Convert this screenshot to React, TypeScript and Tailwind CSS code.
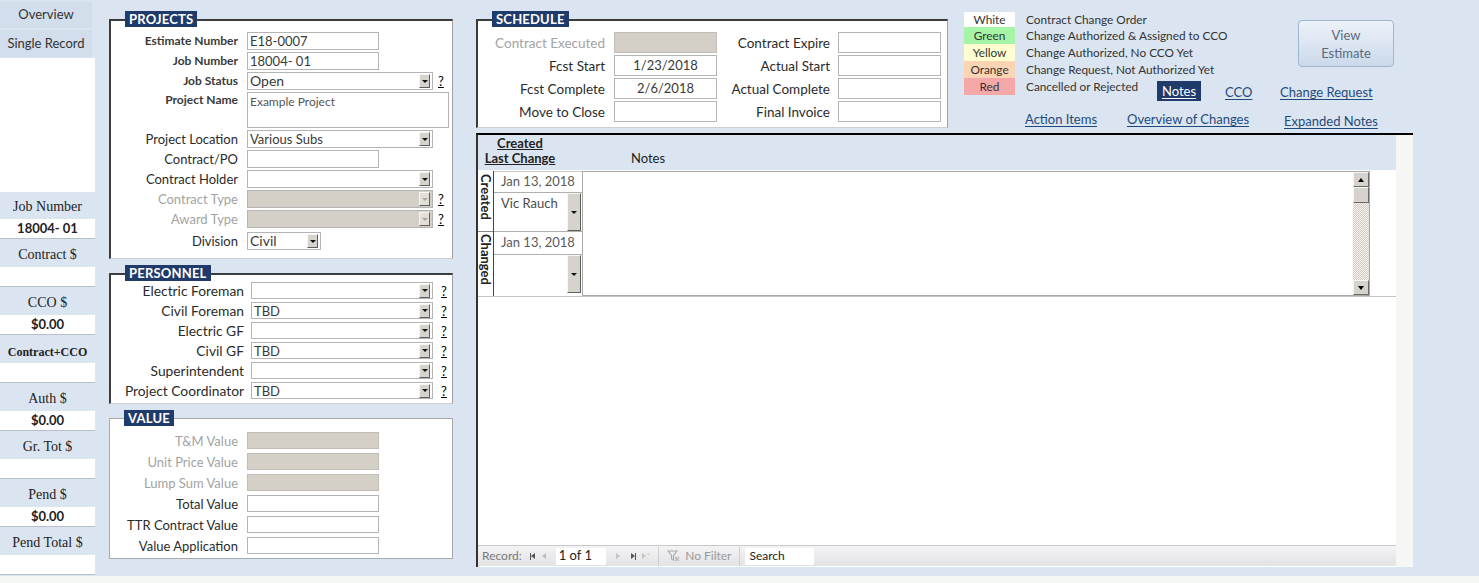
import React from 'react'

function Drop({ className = '', off = false }: { className?: string; off?: boolean }) {
  return (
    <span
      className={`flex shrink-0 items-center justify-center border border-t-[#f6f6f6] border-l-[#f6f6f6] border-r-[#5e5e5e] border-b-[#5e5e5e] ${
        off ? 'bg-[#e2dfd9]' : 'bg-[#d6d3cc]'
      } ${className}`}
    >
      <span
        className={`block h-0 w-0 border-x-[3px] border-t-[3px] border-x-transparent ${
          off ? 'border-t-[#a8a8a8]' : 'border-t-[#111]'
        }`}
      />
    </span>
  )
}

function Combo({
  value = '',
  className = '',
  off = false,
  text = 'text-[13px]',
}: {
  value?: string
  className?: string
  off?: boolean
  text?: string
}) {
  return (
    <div
      className={`flex h-full items-center border border-[#b4b4b4] ${off ? 'bg-[#d4d0c8]' : 'bg-white'} ${className}`}
    >
      <span className={`flex-1 whitespace-nowrap pl-[2px] leading-[16px] text-[#3a3a3a] ${text}`}>{value}</span>
      <Drop off={off} className="mr-[2px] h-[14px] w-[11px]" />
    </div>
  )
}

function Box({
  value = '',
  className = '',
  off = false,
  text = 'text-[13px]',
}: {
  value?: string
  className?: string
  off?: boolean
  text?: string
}) {
  return (
    <div
      className={`flex h-full items-center border ${
        off ? 'border-[#c2beb6] bg-[#d4d0c8]' : 'border-[#b4b4b4] bg-white'
      } ${className}`}
    >
      <span className={`whitespace-nowrap pl-[2px] leading-[16px] text-[#3a3a3a] ${text}`}>{value}</span>
    </div>
  )
}

function Help({ className = 'ml-[5px]' }: { className?: string }) {
  return <span className={`text-[13px] leading-[16px] text-black underline ${className}`}>?</span>
}

function Panel({
  title,
  className = '',
  light = false,
  children,
}: {
  title: string
  className?: string
  light?: boolean
  children?: React.ReactNode
}) {
  return (
    <div
      className={`relative bg-white ${
        light
          ? 'border border-[#a9a9a9]'
          : 'border-t-2 border-l-2 border-r border-b border-t-[#3c3c3c] border-l-[#3c3c3c] border-r-[#a0a0a0] border-b-[#cfcfcf]'
      } ${className}`}
    >
      <span
        className={`absolute left-[14px] bg-[#1f3b6b] px-[4px] text-[13px] font-bold leading-[16px] tracking-[0.2px] text-white ${
          light ? '-top-[9px]' : '-top-[10px]'
        }`}
      >
        {title}
      </span>
      {children}
    </div>
  )
}

function Row({
  label,
  labelClass = '',
  lw,
  gap,
  h,
  top = false,
  children,
}: {
  label: string
  labelClass?: string
  lw: string
  gap: string
  h: string
  top?: boolean
  children?: React.ReactNode
}) {
  return (
    <div className={`flex ${top ? 'items-start' : 'items-center'} ${h}`}>
      <span className={`shrink-0 whitespace-nowrap text-right leading-[16px] ${lw} ${labelClass}`}>{label}</span>
      <div className={`flex h-full items-center ${gap}`}>{children}</div>
    </div>
  )
}

const sideItems: [string, string][] = [
  ['Job Number', '18004- 01'],
  ['Contract $', ''],
  ['CCO $', '$0.00'],
  ['Contract+CCO', ''],
  ['Auth $', '$0.00'],
  ['Gr. Tot $', ''],
  ['Pend $', '$0.00'],
  ['Pend Total $', ''],
]

function Sidebar() {
  return (
    <div className="flex w-[95px] shrink-0 flex-col">
      <div className="mt-[2px] flex h-[26px] w-[92px] items-center justify-center bg-[#d2deeb] text-[13px] text-[#333]">
        Overview
      </div>
      <div className="mt-[2px] flex h-[27px] w-[92px] items-center justify-center bg-[#d2deeb] text-[13px] text-[#333]">
        Single Record
      </div>
      <div className="mt-[1px] h-[134px] bg-white" />
      {sideItems.map(([label, value], i) => (
        <div key={label} className="flex flex-col">
          <div
            className={`flex items-end justify-center pb-[2px] font-['Liberation_Serif',serif] text-[#222] ${
              i === 0 ? 'h-[27px]' : 'h-[28px]'
            } ${label === 'Contract+CCO' ? 'text-[12px] font-bold' : 'text-[14px]'}`}
          >
            {label}
          </div>
          <div className="flex h-[20px] items-center justify-center border-b border-[#b9bfc7] bg-white text-[13px] font-bold text-[#222]">
            {value}
          </div>
        </div>
      ))}
    </div>
  )
}

function Projects() {
  const lw = 'w-[127px]'
  const gap = 'ml-[9px]'
  const dark = 'text-[12px] font-bold text-[#3a3a3a]'
  const reg = 'text-[13px] text-[#2b2b2b]'
  const grey = 'text-[13px] text-[#a3a3a3]'
  return (
    <Panel title="PROJECTS" className="mt-[19px] h-[240px] w-[344px]">
      <div className="flex flex-col gap-[2px] pt-[11px]">
        <Row label="Estimate Number" labelClass={dark} lw={lw} gap={gap} h="h-[18px]">
          <Box value="E18-0007" className="w-[132px]" />
        </Row>
        <Row label="Job Number" labelClass={dark} lw={lw} gap={gap} h="h-[18px]">
          <Box value="18004- 01" className="w-[132px]" />
        </Row>
        <Row label="Job Status" labelClass={dark} lw={lw} gap={gap} h="h-[18px]">
          <Combo value="Open" className="w-[186px]" text="text-[14px]" />
          <Help />
        </Row>
        <Row label="Project Name" labelClass={dark} lw={lw} gap={gap} h="h-[36px]" top>
          <div className="h-full w-[202px] border border-[#b4b4b4] bg-white pl-[2px] pt-[1px] text-[12px] leading-[16px] text-[#555]">
            Example Project
          </div>
        </Row>
        <Row label="Project Location" labelClass={reg} lw={lw} gap={gap} h="h-[18px]">
          <Combo value="Various Subs" className="w-[186px]" />
        </Row>
        <Row label="Contract/PO" labelClass={reg} lw={lw} gap={gap} h="h-[18px]">
          <Box className="w-[132px]" />
        </Row>
        <Row label="Contract Holder" labelClass={reg} lw={lw} gap={gap} h="h-[18px]">
          <Combo className="w-[186px]" />
        </Row>
        <Row label="Contract Type" labelClass={grey} lw={lw} gap={gap} h="h-[18px]">
          <Combo off className="w-[186px]" />
          <Help />
        </Row>
        <Row label="Award Type" labelClass={grey} lw={lw} gap={gap} h="h-[18px]">
          <Combo off className="w-[186px]" />
          <Help />
        </Row>
        <div className="mt-[2px]">
          <Row label="Division" labelClass={reg} lw={lw} gap={gap} h="h-[18px]">
            <Combo value="Civil" className="w-[74px]" text="text-[14px]" />
          </Row>
        </div>
      </div>
    </Panel>
  )
}

const people: [string, string][] = [
  ['Electric Foreman', ''],
  ['Civil Foreman', 'TBD'],
  ['Electric GF', ''],
  ['Civil GF', 'TBD'],
  ['Superintendent', ''],
  ['Project Coordinator', 'TBD'],
]

function Personnel() {
  return (
    <Panel title="PERSONNEL" className="mt-[14px] h-[131px] w-[344px]">
      <div className="flex flex-col gap-[3px] pt-[7px]">
        {people.map(([label, value]) => (
          <Row
            key={label}
            label={label}
            labelClass="text-[13.8px] text-[#2b2b2b]"
            lw="w-[133px]"
            gap="ml-[7px]"
            h="h-[17px]"
          >
            <Combo value={value} className="w-[182px]" />
            <Help className="ml-[8px]" />
          </Row>
        ))}
      </div>
    </Panel>
  )
}

const values: [string, boolean][] = [
  ['T&M Value', true],
  ['Unit Price Value', true],
  ['Lump Sum Value', true],
  ['Total Value', false],
  ['TTR Contract Value', false],
  ['Value Application', false],
]

function Value() {
  return (
    <Panel title="VALUE" light className="mt-[14px] h-[141px] w-[344px]">
      <div className="flex flex-col gap-[4px] pt-[13px]">
        {values.map(([label, off]) => (
          <Row
            key={label}
            label={label}
            labelClass={`text-[13px] ${off ? 'text-[#a3a3a3]' : 'text-[#2b2b2b]'}`}
            lw="w-[128px]"
            gap="ml-[9px]"
            h="h-[17px]"
          >
            <Box off={off} className="w-[132px]" />
          </Row>
        ))}
      </div>
    </Panel>
  )
}

const sched: [string, string, boolean, string][] = [
  ['Contract Executed', '', true, 'Contract Expire'],
  ['Fcst Start', '1/23/2018', false, 'Actual Start'],
  ['Fcst Complete', '2/6/2018', false, 'Actual Complete'],
  ['Move to Close', '', false, 'Final Invoice'],
]

function Schedule() {
  return (
    <Panel title="SCHEDULE" className="mt-[19px] h-[109px] w-[472px] shrink-0">
      <div className="flex flex-col gap-[2px] pt-[11px]">
        {sched.map(([l1, v1, off, l2]) => (
          <div key={l1} className="flex h-[21px] items-center">
            <span
              className={`w-[127px] shrink-0 text-right text-[13.5px] leading-[16px] ${
                off ? 'text-[#a3a3a3]' : 'text-[#2b2b2b]'
              }`}
            >
              {l1}
            </span>
            <div
              className={`ml-[9px] flex h-full w-[103px] items-center justify-center border text-[13px] text-[#3a3a3a] ${
                off ? 'border-[#c2beb6] bg-[#d4d0c8]' : 'border-[#b4b4b4] bg-white'
              }`}
            >
              {v1}
            </div>
            <span className="w-[113px] shrink-0 text-right text-[13.5px] leading-[16px] text-[#2b2b2b]">{l2}</span>
            <div className="ml-[8px] h-full w-[103px] border border-[#b4b4b4] bg-white" />
          </div>
        ))}
      </div>
    </Panel>
  )
}

const legend: [string, string, string][] = [
  ['White', 'bg-white', 'Contract Change Order'],
  ['Green', 'bg-[#a6f4a6]', 'Change Authorized & Assigned to CCO'],
  ['Yellow', 'bg-[#ffffd2]', 'Change Authorized, No CCO Yet'],
  ['Orange', 'bg-[#fbd4b3]', 'Change Request, Not Authorized Yet'],
  ['Red', 'bg-[#f5a8a8]', 'Cancelled or Rejected'],
]

const link = 'text-[13px] leading-[16px] text-[#1f4a7c] underline underline-offset-2'

function TopRight() {
  return (
    <div className="ml-[16px] flex flex-1 flex-col">
      <div className="flex">
        <div className="flex w-[334px] flex-col pt-[12px]">
          {legend.map(([name, bg, desc], i) => (
            <div key={name} className={`flex items-start whitespace-nowrap ${i === 0 ? 'h-[15px]' : 'h-[17px]'}`}>
              <span
                className={`flex h-full w-[51px] shrink-0 items-center justify-center text-[11.8px] leading-[14px] text-[#333] ${bg}`}
              >
                {name}
              </span>
              {i < 4 ? (
                <span className="ml-[11px] flex h-full items-center text-[11.8px] leading-[14px] text-[#333]">{desc}</span>
              ) : (
                <>
                  <span className="ml-[11px] flex h-full w-[131px] shrink-0 items-center text-[11.8px] leading-[14px] text-[#333]">
                    {desc}
                  </span>
                  <span className="mt-[3px] flex h-[20px] w-[44px] shrink-0 items-center justify-center bg-[#1f3b6b] text-[13px] leading-[16px] text-white underline underline-offset-2">
                    Notes
                  </span>
                  <span className={`ml-[24px] mt-[6px] w-[55px] shrink-0 ${link}`}>CCO</span>
                  <span className={`mt-[6px] shrink-0 ${link}`}>Change Request</span>
                </>
              )}
            </div>
          ))}
        </div>
        <div className="mt-[20px] flex h-[47px] w-[96px] shrink-0 flex-col items-center justify-center rounded-[4px] border border-[#9fb6d3] bg-gradient-to-b from-[#edf2f9] to-[#cbd9ea] text-[13px] leading-[18px] text-[#5b6a7e]">
          <span>View</span>
          <span>Estimate</span>
        </div>
      </div>
      <div className="ml-[61px] mt-[16px] flex items-start whitespace-nowrap">
        <span className={`w-[102px] shrink-0 ${link}`}>Action Items</span>
        <span className={`w-[157px] shrink-0 ${link}`}>Overview of Changes</span>
        <span className={`mt-[2px] ${link}`}>Expanded Notes</span>
      </div>
    </div>
  )
}

function Tri({ dir, className = '' }: { dir: 'l' | 'r' | 'u' | 'd'; className?: string }) {
  const cls =
    dir === 'l'
      ? 'border-y-[3.5px] border-r-[4px] border-y-transparent'
      : dir === 'r'
        ? 'border-y-[3.5px] border-l-[4px] border-y-transparent'
        : dir === 'u'
          ? 'border-x-[3.5px] border-b-[4px] border-x-transparent'
          : 'border-x-[3.5px] border-t-[4px] border-x-transparent'
  return <span className={`block h-0 w-0 ${cls} ${className}`} />
}

function ScrollBtn({ up }: { up: boolean }) {
  return (
    <div className="flex h-[15px] items-center justify-center border border-t-[#f6f6f6] border-l-[#f6f6f6] border-r-[#6b6b6b] border-b-[#6b6b6b] bg-[#d6d3cc]">
      <Tri dir={up ? 'u' : 'd'} className={up ? 'border-b-black' : 'border-t-black'} />
    </div>
  )
}

function Subform() {
  return (
    <div className="flex h-[434px] w-[937px] border-t-2 border-l-2 border-t-black border-l-[#333]">
      <div className="flex w-[918px] flex-col">
        <div className="flex h-[35px] shrink-0 items-end bg-[#dbe5f1] pb-[4px]">
          <div className="flex w-[84px] flex-col items-center text-[13px] font-bold leading-[15px] text-[#222]">
            <span className="underline">Created</span>
            <span className="underline">Last Change</span>
          </div>
          <span className="ml-[69px] text-[13px] leading-[15px] text-[#222]">Notes</span>
        </div>
        <div className="flex-1 bg-white pt-[1px]">
          <div className="flex h-[126px] border-b border-[#c4c4c4]">
            <div className="flex w-[16px] shrink-0 flex-col border-r border-[#444]">
              <div className="flex h-[61px] justify-center border-b border-[#888] pt-[3px]">
                <span className="text-[13px] font-bold leading-[14px] text-[#222] [writing-mode:vertical-rl]">Created</span>
              </div>
              <div className="flex flex-1 justify-center pt-[2px]">
                <span className="text-[13px] font-bold leading-[14px] text-[#222] [writing-mode:vertical-rl]">Changed</span>
              </div>
            </div>
            <div className="flex w-[88px] shrink-0 flex-col">
              <div className="flex h-[21px] items-center justify-center border-t border-[#c8c8c8] text-[13px] text-[#5a5a5a]">
                Jan 13, 2018
              </div>
              <div className="flex h-[40px] border-y border-[#b0b0b0]">
                <span className="flex-1 pl-[7px] pt-[2px] text-[13px] leading-[16px] text-[#4a4a4a]">Vic Rauch</span>
                <Drop className="mr-[1px] h-[38px] w-[14px]" />
              </div>
              <div className="flex h-[22px] items-center justify-center text-[13px] text-[#5a5a5a]">Jan 13, 2018</div>
              <div className="flex flex-1 border-t border-[#b0b0b0]">
                <span className="flex-1" />
                <Drop className="mr-[1px] h-[38px] w-[14px]" />
              </div>
            </div>
            <div className="flex w-[788px] shrink-0 justify-end border border-[#a9a9a9]">
              <div className="flex w-[16px] flex-col">
                <ScrollBtn up />
                <div className="h-[16px] border border-t-[#f6f6f6] border-l-[#f6f6f6] border-r-[#6b6b6b] border-b-[#6b6b6b] bg-[#d6d3cc]" />
                <div className="flex-1 bg-[image:repeating-conic-gradient(#cfcbc3_0%_25%,#f5f4f0_0%_50%)] bg-[length:2px_2px]" />
                <ScrollBtn up={false} />
              </div>
            </div>
          </div>
        </div>
        <div className="flex h-[21px] shrink-0 items-center border-t border-[#c9c9c9] bg-gradient-to-b from-[#f3f3f5] to-[#e3e3e5] text-[12px] text-[#7a7a7a]">
          <span className="pl-[4px]">Record:</span>
          <span className="ml-[8px] flex items-center">
            <span className="h-[7px] w-[1px] bg-[#555]" />
            <Tri dir="l" className="border-r-[#555]" />
          </span>
          <Tri dir="l" className="ml-[7px] border-r-[#bdbdbd]" />
          <span className="ml-[10px] flex h-[17px] w-[50px] items-center bg-white pl-[3px] text-[13px] text-[#222]">1 of 1</span>
          <Tri dir="r" className="ml-[10px] border-l-[#c4c4c4]" />
          <span className="ml-[11px] flex items-center">
            <Tri dir="r" className="border-l-[#555]" />
            <span className="h-[7px] w-[1px] bg-[#555]" />
          </span>
          <span className="ml-[6px] flex items-center">
            <Tri dir="r" className="border-l-[#c4c4c4]" />
            <span className="ml-[1px] text-[8px] leading-[8px] text-[#d4d4a0]">*</span>
          </span>
          <span className="ml-[8px] h-[19px] w-[1px] bg-[#cfcfcf]" />
          <svg className="ml-[8px]" width="13" height="12" viewBox="0 0 13 12">
            <path d="M1 1h9L6.5 5.5V10L4.5 9V5.5Z" fill="none" stroke="#a9a9a9" strokeWidth="1.1" />
            <path d="M8 7l4 4M12 7l-4 4" stroke="#b7b7b7" strokeWidth="1.2" />
          </svg>
          <span className="ml-[5px] text-[#9a9a9a]">No Filter</span>
          <span className="ml-[8px] h-[19px] w-[1px] bg-[#cfcfcf]" />
          <span className="ml-[5px] flex h-[17px] w-[69px] items-center bg-white pl-[4px] text-[12px] text-[#222]">Search</span>
        </div>
        <div className="h-[1px] shrink-0 bg-white" />
      </div>
      <div className="flex-1 bg-[#f6f6f4]" />
    </div>
  )
}

export default function App() {
  return (
    <div className="h-[583px] w-[1479px] overflow-hidden bg-[#f4f6f1] font-['Lato',sans-serif]">
      <div className="flex h-[576px] bg-[#dbe5f1]">
        <Sidebar />
        <div className="ml-[14px] flex w-[344px] shrink-0 flex-col">
          <Projects />
          <Personnel />
          <Value />
        </div>
        <div className="ml-[23px] flex flex-1 flex-col">
          <div className="flex h-[133px] shrink-0">
            <Schedule />
            <TopRight />
          </div>
          <Subform />
        </div>
      </div>
    </div>
  )
}
